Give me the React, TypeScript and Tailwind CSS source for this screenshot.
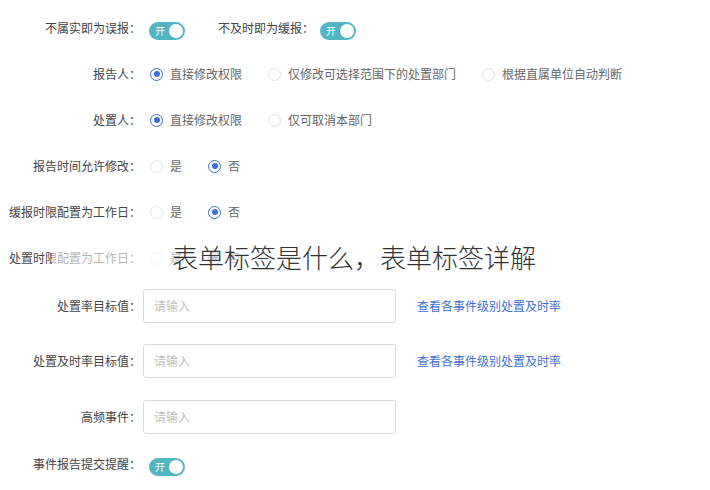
import React from 'react';

const font = { fontFamily: '"Noto Sans CJK SC", "Noto Sans", sans-serif' };

function Toggle() {
  return (
    <span className="relative inline-flex h-[18px] w-[36px] items-center rounded-full bg-[#52b5c2]">
      <span className="ml-[6px] text-[10px] leading-none text-white">开</span>
      <span className="absolute right-[2px] top-[2px] h-[14px] w-[14px] rounded-full bg-white" />
    </span>
  );
}

function Radio({ checked, label }: { checked?: boolean; label: string }) {
  return (
    <span className="mr-[26px] inline-flex items-center">
      <span
        className={
          checked
            ? 'flex h-[13px] w-[13px] items-center justify-center rounded-full border border-[#3e6fd0] bg-white'
            : 'h-[13px] w-[13px] rounded-full border border-[#e2e2e2] bg-white'
        }
      >
        {checked && <span className="h-[6px] w-[6px] rounded-full bg-[#3e6fd0]" />}
      </span>
      <span className="ml-[7px] text-[12px] text-[#666]">{label}</span>
    </span>
  );
}

function Label({ children }: { children: React.ReactNode }) {
  return <span className="w-[141px] shrink-0 text-right text-[12px] text-[#444]">{children}</span>;
}

function RadioRow({ label, options, checked }: { label: string; options: string[]; checked: number }) {
  return (
    <div className="flex h-[46px] items-center">
      <Label>{label}</Label>
      <div className="ml-[9px] flex items-center">
        {options.map((o, i) => (
          <Radio key={o} label={o} checked={i === checked} />
        ))}
      </div>
    </div>
  );
}

function InputRow({ label, link }: { label: string; link?: boolean }) {
  return (
    <div className="flex h-[34px] items-center">
      <Label>{label}</Label>
      <div className="ml-[2px] flex h-[34px] w-[253px] items-center rounded-[3px] border border-[#dcdcdc] bg-white px-[10px] text-[12px] text-[#c0c0c0]">
        请输入
      </div>
      {link && <span className="ml-[21px] text-[12px] text-[#3e6fd6]">查看各事件级别处置及时率</span>}
    </div>
  );
}

export default function App() {
  return (
    <div className="relative h-[490px] w-[710px] overflow-hidden bg-white" style={font}>
      <div className="flex flex-col pt-[5px]">
        <div className="flex h-[46px] items-center">
          <Label>不属实即为误报：</Label>
          <span className="ml-[8px]">
            <Toggle />
          </span>
          <span className="ml-[33px] text-[12px] text-[#444]">不及时即为缓报：</span>
          <span className="ml-[6px]">
            <Toggle />
          </span>
        </div>
        <RadioRow label="报告人：" options={['直接修改权限', '仅修改可选择范围下的处置部门', '根据直属单位自动判断']} checked={0} />
        <RadioRow label="处置人：" options={['直接修改权限', '仅可取消本部门']} checked={0} />
        <RadioRow label="报告时间允许修改：" options={['是', '否']} checked={1} />
        <RadioRow label="缓报时限配置为工作日：" options={['是', '否']} checked={1} />
        <RadioRow label="处置时限配置为工作日：" options={['是', '否']} checked={1} />
        <div className="mt-[8px]">
          <InputRow label="处置率目标值：" link />
        </div>
        <div className="mt-[21px]">
          <InputRow label="处置及时率目标值：" link />
        </div>
        <div className="mt-[22px]">
          <InputRow label="高频事件：" />
        </div>
        <div className="mt-[21px] flex h-[18px] items-center">
          <Label>事件报告提交提醒：</Label>
          <span className="ml-[8px]">
            <Toggle />
          </span>
        </div>
      </div>
      <div className="absolute left-[52px] top-[237px] flex h-[40px] w-[605px] items-center bg-white/60">
        <span className="ml-[120px] text-[26px] font-extralight leading-none text-[#333]">
          表单标签是什么，表单标签详解
        </span>
      </div>
    </div>
  );
}
